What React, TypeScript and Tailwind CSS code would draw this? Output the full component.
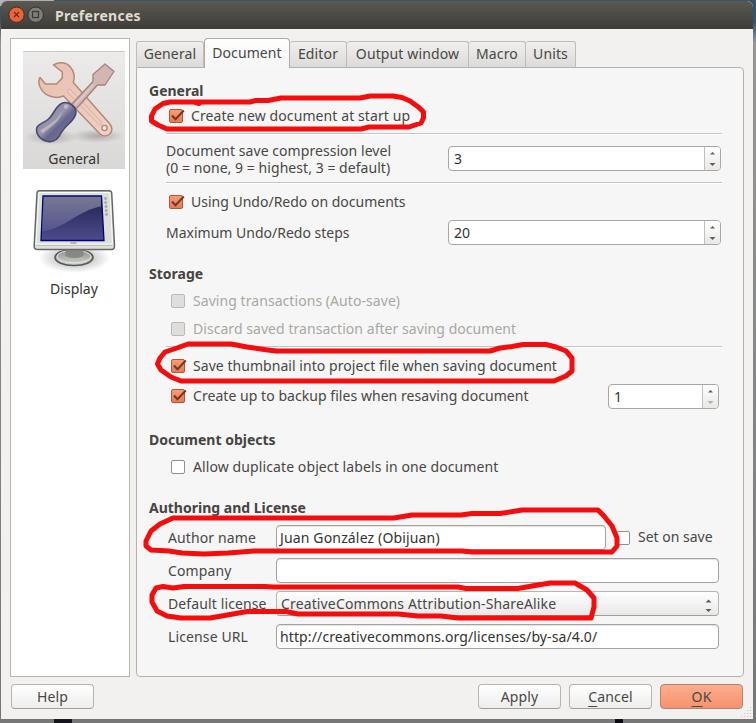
import React from "react";

type Kids = { children?: React.ReactNode };

function Heading({ children, className = "" }: Kids & { className?: string }) {
  return <h2 className={`flex items-center pb-[2px] pl-3 text-[14px] font-bold text-[#45443f] ${className}`}>{children}</h2>;
}

function Rule({ className = "" }: { className?: string }) {
  return <div className={`ml-[29px] mr-[21px] h-[2px] border-t border-[#c6c5c3] bg-white ${className}`} />;
}

function Box({ state = "off" }: { state?: "on" | "off" | "disabled" }) {
  return (
    <svg width="17" height="16" viewBox="0 0 17 16" className="shrink-0">
      <defs>
        <linearGradient id="chk" x1="0" y1="0" x2="0" y2="1">
          <stop offset="0" stopColor="#fb9d74" />
          <stop offset="1" stopColor="#ec7750" />
        </linearGradient>
      </defs>
      <rect
        x="0.5"
        y="1.5"
        width="13"
        height="13"
        rx="1.500"
        fill={state === "on" ? "url(#chk)" : state === "disabled" ? "#dfdedc" : "#fff"}
        stroke={state === "on" ? "#b5583a" : state === "disabled" ? "#bdbab6" : "#94918c"}
      />
      {state === "on" && <path d="M3 7.500 L6.500 11.300 L14.800 2.500" fill="none" stroke="#6b3a28" strokeWidth="2" />}
    </svg>
  );
}

function Check({ state, className, label }: { state?: "on" | "off" | "disabled"; className: string; label: React.ReactNode }) {
  return (
    <label className={`flex items-center gap-[5px] ${state === "disabled" ? "text-[#aaa7a2]" : ""} ${className}`}>
      <Box state={state} />
      <span className="pb-[2px]">{label}</span>
    </label>
  );
}

function Arrows({ dim = false }: { dim?: boolean }) {
  return (
    <svg width="15" height="23" viewBox="0 0 15 23" className="shrink-0">
      <path d="M5 7.4 L7.500 5 L10 7.4z" fill="#5d5c59" />
      <path d="M4.500 16 H10.500 L7.500 19z" fill={dim ? "#b1afab" : "#5d5c59"} />
    </svg>
  );
}

function Spin({ value, className, dim }: { value: string; className: string; dim?: boolean }) {
  return (
    <div className={`flex h-[25px] items-center overflow-hidden rounded-[4px] border border-[#aaa7a2] bg-white ${className}`}>
      <span className="flex-1 pl-[5px] text-[#33322f]">{value}</span>
      <div className="flex h-full items-center border-l border-[#c3c0bb] bg-gradient-to-b from-white to-[#e9e8e7]">
        <Arrows dim={dim} />
      </div>
    </div>
  );
}

function Field({ label, children }: Kids & { label: React.ReactNode }) {
  return (
    <div className="flex h-[33px] items-center pl-[31px] pr-[24px]">
      <span className="w-[108px] shrink-0 tracking-[0.12px]">{label}</span>
      {children}
    </div>
  );
}

function Input({ value, className }: { value?: React.ReactNode; className: string }) {
  return (
    <div className={`flex h-[25px] items-center rounded-[4px] border border-[#a5a29d] bg-white pl-[3px] text-[#33322f] shadow-[inset_0_1px_1px_#e5e3e1] ${className}`}>
      {value}
    </div>
  );
}

function Button({ children, primary = false }: Kids & { primary?: boolean }) {
  return (
    <button
      className={`flex h-[25px] w-[83px] items-center justify-center rounded-[4px] border text-[14px] tracking-[0.15px] ${
        primary
          ? "border-[#b38272] bg-gradient-to-b from-[#fead8e] to-[#f5926d]"
          : "border-[#b8b5b1] border-b-[#a29f9b] bg-gradient-to-b from-white to-[#ededec]"
      }`}
    >
      {children}
    </button>
  );
}

function Tab({ children, className }: Kids & { className: string }) {
  return (
    <div className={`flex h-[26px] items-center justify-center rounded-t-[3px] border border-b-0 border-[#bfbdb9] bg-gradient-to-b from-[#f0efee] to-[#dcdbd9] pb-[2px] tracking-[0.13px] ${className}`}>
      {children}
    </div>
  );
}

function ToolsIcon() {
  return (
    <svg width="102" height="98" viewBox="23 52 102 98">
      <defs>
        <radialGradient id="toolShade">
          <stop offset="0" stopColor="#8d8988" stopOpacity="0.6" />
          <stop offset="1" stopColor="#8d8988" stopOpacity="0" />
        </radialGradient>
        <linearGradient id="handle" x1="0" y1="0" x2="1" y2="1">
          <stop offset="0" stopColor="#77789d" />
          <stop offset="0.45" stopColor="#9896ad" />
          <stop offset="0.58" stopColor="#65658e" />
          <stop offset="1" stopColor="#85859f" />
        </linearGradient>
        <linearGradient id="wrench" x1="0" y1="0" x2="1" y2="1">
          <stop offset="0" stopColor="#e9bfb1" />
          <stop offset="1" stopColor="#f1d0c5" />
        </linearGradient>
      </defs>
      <ellipse cx="51" cy="137" rx="27" ry="8" fill="url(#toolShade)" />
      <ellipse cx="97" cy="136" rx="27" ry="7" fill="url(#toolShade)" />
      <path
        d="M53.500 65 C59 61.500 66 62 70 66.500 C74 71 75 77 73.300 82.500 L109.500 123.500 C113 127 112.500 132 109 134.500 C106 136.500 102 136 99.500 133.500 L63.500 96 C55 99.500 44.500 96 40.500 88 C38.500 84 38.300 80 40 77.500 L45.500 84 H56.500 L62.300 78 V72z"
        fill="url(#wrench)"
        stroke="#b18a76"
        strokeWidth="1.500"
        strokeLinejoin="round"
      />
      <path d="M69 91 L100 123" stroke="#cfaea2" strokeWidth="4.500" strokeLinecap="round" />
      <path d="M69 91 L100 123" stroke="#eecbbf" strokeWidth="3" strokeLinecap="round" />
      <circle cx="104.500" cy="128" r="2.600" fill="#fae8e2" stroke="#a98478" strokeWidth="1.300" />
      <path
        d="M105 64 L114 71.500 L105 85 H97.500 L76.500 108.500 L71.500 104.500 L93 81.500 V74.500z"
        fill="#d3b6b2"
        stroke="#a18380"
        strokeWidth="1.300"
        strokeLinejoin="round"
      />
      <path d="M94 84 L75 105" stroke="#e3cdc9" strokeWidth="1.200" />
      <path
        d="M62 103.300 C68 100.500 77 106.500 75.800 113.500 C74.500 121 66 124.500 61 133 C58 139.500 53 142.300 48 141.500 C41 141 35.500 134 36.700 128 C38.500 123.500 44 123 48.500 119 C54 114.500 55 106.500 62 103.300z"
        fill="url(#handle)"
        stroke="#4a4970"
        strokeWidth="1.600"
      />
      <path d="M40 130.500 C47 126 57 121 62.500 111 C60 122 51 126 43 133.500z" fill="#c9bac0" opacity="0.800" />
      <circle cx="66" cy="106.500" r="2.200" fill="#bcb7c6" />
    </svg>
  );
}

function MonitorIcon() {
  return (
    <svg width="86" height="86" viewBox="31.500 188 86 86">
      <defs>
        <radialGradient id="footShade">
          <stop offset="0" stopColor="#777" stopOpacity="0.700" />
          <stop offset="1" stopColor="#777" stopOpacity="0" />
        </radialGradient>
        <linearGradient id="screen" x1="0" y1="0" x2="0" y2="1">
          <stop offset="0" stopColor="#20204f" />
          <stop offset="1" stopColor="#4d4c8c" />
        </linearGradient>
        <linearGradient id="gloss" x1="0" y1="0" x2="0" y2="1">
          <stop offset="0" stopColor="#777892" />
          <stop offset="1" stopColor="#555590" />
        </linearGradient>
        <linearGradient id="foot" x1="0" y1="0" x2="0" y2="1">
          <stop offset="0" stopColor="#8b8e8a" />
          <stop offset="1" stopColor="#d3d6d0" />
        </linearGradient>
      </defs>
      <ellipse cx="75" cy="258" rx="36" ry="15" fill="url(#footShade)" />
      <ellipse cx="74.500" cy="257.500" rx="19" ry="8" fill="url(#foot)" stroke="#555753" strokeWidth="1.600" />
      <ellipse cx="74.500" cy="256.500" rx="17" ry="6.300" fill="none" stroke="#e5e7e3" />
      <path d="M66 249 H84 V256 C79 258.500 71 258.500 66 256z" fill="#868884" />
      <path d="M40 190.700 H109.500 Q112 190.700 112.200 193 L115 246 Q115 249.400 112 249.400 H37.500 Q34.500 249.400 34.700 246 L37.500 193 Q37.700 190.700 40 190.700z" fill="#dde0d9" stroke="#656763" strokeWidth="1.500" />
      <path d="M39.500 192.500 H110.500 L113 244 H36.500z" fill="none" stroke="#fafaf8" />
      <path d="M37 245.500 H113" stroke="#bfc2bb" strokeWidth="1" />
      <path d="M43.500 196 H102 L104.500 240.500 H41.500z" fill="url(#screen)" stroke="#00007a" strokeWidth="1.300" />
      <path d="M44.200 196.700 H101.500 V206.500 C79 210 67 228 42.500 231.500z" fill="url(#gloss)" />
      <g fill="#b1b4ae" stroke="#979a94" strokeWidth="0.500">
        <circle cx="106" cy="198.500" r="1.200" />
        <circle cx="106.200" cy="202.500" r="1.200" />
        <circle cx="106.500" cy="206.500" r="1.200" />
        <circle cx="106.700" cy="210.500" r="1.200" />
        <circle cx="107" cy="214.500" r="1.200" />
      </g>
      <path d="M71 243 H77" stroke="#a5a8a2" strokeWidth="1.500" />
    </svg>
  );
}

function Grip() {
  return (
    <svg width="11" height="12" viewBox="0 0 11 12" className="absolute bottom-[5px] right-[4px]" fill="none" stroke="#cfcdca" strokeWidth="1.200" strokeDasharray="1.200 1.800">
      <path d="M0 10.500 H11 M3 7.500 H11 M6 4.500 H11 M9 1.500 H11" />
    </svg>
  );
}

function Marks() {
  return (
    <svg width="756" height="723" viewBox="0 0 756 723" className="pointer-events-none absolute left-0 top-0" fill="none" stroke="#f50d0d" strokeWidth="5" strokeLinecap="round" strokeLinejoin="round">
      <path d="M199 103.500 L194 102 M190 102 H250 L256 100.500 H268 L281 98 H360 L370 96 H393 L402 97.500 L410 101 L419 107.500 L423.500 112 V118 L421 123 L415 125 L409 127 H369 L361 129 H167 L158 125 L151.500 121 V116 L155 109 L163 103.500 L170 102 H190" />
      <path d="M188 344 H231 L247 347 L264 349.500 L276 351 H490 L500 348 L512 346.500 L523 344.500 H546 L556 347 L566 351 L572 358 V371 L566 376 L554 381 H181 L171 377 L161 370 L157.500 364 L160 358 L165 352 L177 348z" />
      <path d="M173 518 H394 L412 515 H461 L472 513.500 H500 L522 510 H598 L604 516 L612 526 L617 538 V546 L612 552 H472 L462 551 H254 L228 553 L204 554 L182 553 L169 551 L151 550 L146 546 V541 L151 531 L160 524z" />
      <path d="M184 586.500 H265 L273 587 H458 L466 588.500 H518 L532 586 L550 583 H575 L587 590 L594 598 V607 L591 618 H458 L441 616 H418 L398 614 H298 L286 611.500 H247 L233 614 L210 618 H181 L167 616 L157 611 L152 602 V595 L156 588 L163 586.500 L173 588z" />
    </svg>
  );
}

export default function App() {
  return (
    <div className="relative flex h-[723px] w-[756px] flex-col overflow-hidden bg-gradient-to-b from-[#34536c] from-3% via-[#999897] via-6% to-[#777777] font-['Noto_Sans',sans-serif] text-[14px] leading-[17px] text-[#484744]">
      <div className="absolute left-0 top-0 h-[6px] w-[54px] bg-[#b5b8b8]" />
      <div className="absolute bottom-0 left-[54px] h-[4px] w-[18px] bg-[#14141c]" />
      <div className="absolute bottom-0 left-[615px] h-[4px] w-[8px] bg-[#0b0b14]" />
      <div className="relative ml-px mt-px flex h-[718px] w-[752px] flex-col rounded-t-[6px] bg-[#f2f1f0] shadow-[0_0_1px_#666]">
        <header className="flex h-[28px] shrink-0 items-center rounded-t-[6px] bg-gradient-to-b from-[#5b5951] to-[#3d3c37] pl-[7px]">
          <svg width="37" height="18" viewBox="0 0 37 18">
            <circle cx="8.500" cy="8.700" r="7.700" fill="#ed6339" stroke="#34322e" />
            <path d="M6 6.200 L11 11.200 M11 6.200 L6 11.200" stroke="#542818" strokeWidth="1.200" />
            <circle cx="27.700" cy="8.700" r="7.700" fill="#7f7d77" stroke="#34322e" />
            <rect x="24.500" y="5.500" width="6" height="6" fill="none" stroke="#3c3a35" strokeWidth="1.200" />
          </svg>
          <h1 className="ml-[10px] text-[14px] font-bold tracking-[0.28px] text-[#dfdbd2]">Preferences</h1>
        </header>
        <main className="flex h-[648px] shrink-0 pl-[9px] pt-[9px]">
          <aside className="flex h-[639px] w-[120px] flex-col items-center border border-[#b9b6b2] bg-white pl-[8px] pt-[12px] text-[#33322f]">
            <div className="flex h-[118px] w-[102px] shrink-0 flex-col items-center border-t border-[#c9c7c4] bg-gradient-to-b from-[#ecebea] to-[#dad8d6]">
              <ToolsIcon />
              <span>General</span>
            </div>
            <div className="mt-[19px] flex flex-col items-center">
              <MonitorIcon />
              <span className="mt-[6px]">Display</span>
            </div>
          </aside>
          <section className="ml-[6px] w-[609px]">
            <nav className="flex h-[29px] items-end">
              <Tab className="w-[68px]">General</Tab>
              <div className="z-10 -mb-px flex h-[30px] w-[86px] items-center justify-center rounded-t-[4px] border border-b-0 border-[#aeaba7] bg-gradient-to-b from-white to-[#f6f6f6] pb-[2px] tracking-[0.1px]">Document</div>
              <Tab className="w-[57px] border-l-0">Editor</Tab>
              <Tab className="w-[122px] border-l-0">Output window</Tab>
              <Tab className="w-[57px] border-l-0">Macro</Tab>
              <Tab className="w-[50px] border-l-0">Units</Tab>
            </nav>
            <div className="h-[610px] w-[608px] rounded-b-[4px] rounded-tr-[4px] border border-[#b5b2ae] bg-[#f6f6f6] pt-[14px]">
              <Heading className="h-[18px]">General</Heading>
              <Check state="on" className="h-[32px] pl-[32px] tracking-[0.09px]" label="Create new document at start up" />
              <Rule className="mt-px" />
              <div className="flex h-[47px] items-center justify-between pl-[29px] pr-[22px]">
                <p className="tracking-[0.05px]">
                  Document save compression level
                  <br />
                  (0 = none, 9 = highest, 3 = default)
                </p>
                <Spin value="3" className="w-[273px]" />
              </div>
              <Rule />
              <Check state="on" className="h-[36px] pl-[32px]" label="Using Undo/Redo on documents" />
              <div className="flex h-[26px] items-start justify-between pl-[29px] pr-[22px]">
                <span className="pt-[4px]">Maximum Undo/Redo steps</span>
                <Spin value="20" className="w-[273px]" />
              </div>
              <Heading className="mt-[18px] h-[20px]">Storage</Heading>
              <Check state="disabled" className="mt-[3px] h-[28px] pl-[34px] tracking-[0.06px]" label="Saving transactions (Auto-save)" />
              <Check state="disabled" className="h-[28px] pl-[34px] tracking-[0.05px]" label="Discard saved transaction after saving document" />
              <Rule className="mt-[3px]" />
              <Check state="on" className="h-[36px] pl-[34px] tracking-[0.05px]" label="Save thumbnail into project file when saving document" />
              <div className="flex h-[26px] items-start justify-between pr-[24px]">
                <Check state="on" className="h-[24px] pl-[34px] tracking-[0.05px]" label="Create up to backup files when resaving document" />
                <Spin value="1" className="w-[111px]" dim />
              </div>
              <Heading className="mt-[20px] h-[20px]">Document objects</Heading>
              <Check className="mt-[3px] h-[28px] pl-[34px] tracking-[0.1px]" label="Allow duplicate object labels in one document" />
              <Heading className="mt-[17px] h-[20px]">Authoring and License</Heading>
              <div className="mt-[3px]">
                <Field label="Author name">
                  <Input className="w-[330px] tracking-[0.15px]" value="Juan González (Obijuan)" />
                  <Check className="pl-[10px]" label="Set on save" />
                </Field>
                <Field label="Company">
                  <Input className="w-[443px]" />
                </Field>
                <Field label="Default license">
                  <div className="flex h-[25px] w-[443px] items-center justify-between rounded-[4px] border border-[#b8b5b1] border-b-[#a29f9b] bg-gradient-to-b from-white to-[#e9e8e7] pl-[4px]">
                    <span className="tracking-[0.14px]">CreativeCommons Attribution-ShareAlike</span>
                    <svg width="17" height="23" viewBox="0 0 17 23">
                      <path d="M4.500 10.500 H10.500 L7.500 7.500z M4.500 17 H10.500 L7.500 20z" fill="#5d5c59" />
                    </svg>
                  </div>
                </Field>
                <Field label="License URL">
                  <Input className="w-[443px] tracking-[0.12px]" value="http://creativecommons.org/licenses/by-sa/4.0/" />
                </Field>
              </div>
            </div>
          </section>
        </main>
        <footer className="flex pl-[10px] pr-[10px] pt-[7px]">
          <Button>Help</Button>
          <div className="ml-auto flex gap-[8px]">
            <Button>Apply</Button>
            <Button><span><u className="underline-offset-4">C</u>ancel</span></Button>
            <Button primary><span><u className="underline-offset-4">O</u>K</span></Button>
          </div>
        </footer>
      </div>
      <Grip />
      <Marks />
    </div>
  );
}
